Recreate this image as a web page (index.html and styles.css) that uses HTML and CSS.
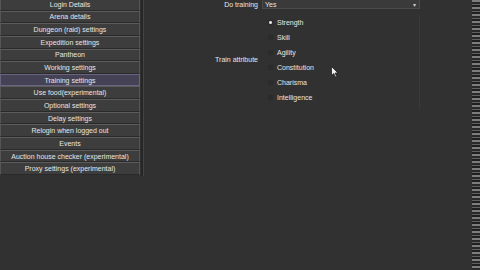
FILE: index.html
```html
<!DOCTYPE html>
<html>
<head>
<meta charset="utf-8">
<link rel="stylesheet" href="styles.css">
</head>
<body>
<div class="app">
  <nav class="sidebar">
    <div class="btn">Login Details</div>
    <div class="btn">Arena details</div>
    <div class="btn">Dungeon (raid) settings</div>
    <div class="btn">Expedition settings</div>
    <div class="btn">Pantheon</div>
    <div class="btn">Working settings</div>
    <div class="btn active">Training settings</div>
    <div class="btn">Use food(experimental)</div>
    <div class="btn">Optional settings</div>
    <div class="btn">Delay settings</div>
    <div class="btn">Relogin when logged out</div>
    <div class="btn">Events</div>
    <div class="btn">Auction house checker (experimental)</div>
    <div class="btn">Proxy settings (experimental)</div>
  </nav>
  <div class="divider"></div>
  <main class="content">
    <div class="row">
      <div class="label">Do training</div>
      <div class="combo"><span>Yes</span><span class="arrow">▾</span></div>
    </div>
    <div class="row attr">
      <div class="label">Train attribute</div>
      <div class="radios">
        <div class="radio on"><span class="dot"></span>Strength</div>
        <div class="radio"><span class="dot"></span>Skill</div>
        <div class="radio"><span class="dot"></span>Agility</div>
        <div class="radio"><span class="dot"></span>Constitution</div>
        <div class="radio"><span class="dot"></span>Charisma</div>
        <div class="radio"><span class="dot"></span>Intelligence</div>
      </div>
    </div>
    <svg class="cursor" width="8" height="12" viewBox="0 0 8 12"><path d="M0.5 0.5 L0.5 9.5 L2.7 7.5 L4.3 11 L5.6 10.4 L4.1 7 L7 7 Z" fill="#eee" stroke="#222" stroke-width="0.8"/></svg>
  </main>
  <div class="edge"></div>
</div>
</body>
</html>
```
FILE: styles.css
```css
html, body {
  margin: 0;
  padding: 0;
  background: #313131;
  width: 480px;
  height: 270px;
  overflow: hidden;
  font-family: "Liberation Sans", Arial, sans-serif;
  font-size: 7px;
  color: #e6e6e6;
}
.app {
  display: flex;
  height: 270px;
}
.sidebar {
  width: 140px;
  margin-top: -2px;
  display: flex;
  flex-direction: column;
  align-self: flex-start;
}
.btn {
  height: 12.65px;
  box-sizing: border-box;
  background: #3d3d3d;
  border: 1px solid #555;
  border-top-color: #5c5c5c;
  border-bottom-color: #2a2a2a;
  display: flex;
  align-items: center;
  justify-content: center;
  white-space: nowrap;
  line-height: 1;
}
.btn.active {
  background: #464255;
  border-color: #6a6480;
}
.divider {
  width: 2px;
  margin-left: 1px;
  height: 176px;
  background: #262626;
  border-right: 1px solid #444;
}
.content {
  position: relative;
  flex: 1;
  display: flex;
  flex-direction: column;
}
.row {
  display: grid;
  grid-template-columns: 114px 158px;
  column-gap: 4px;
  align-items: center;
}
.label {
  text-align: right;
}
.attr .label {
  padding-bottom: 6px;
}
.combo {
  height: 10px;
  margin-top: -1px;
  box-sizing: border-box;
  background: #3a3a3a;
  border: 1px solid #4a4a4a;
  display: flex;
  justify-content: space-between;
  align-items: center;
  padding: 0 3px 0 2px;
}
.arrow {
  font-size: 6px;
  color: #ccc;
}
.attr {
  margin-top: 6px;
}
.radios {
  display: flex;
  flex-direction: column;
  padding: 0 0 4px 6px;
  border-right: 1px solid #3a3a3a;
}
.radio {
  height: 15px;
  display: flex;
  align-items: center;
  gap: 4px;
}
.dot {
  width: 5px;
  height: 5px;
  border-radius: 50%;
  background: #2c2c2c;
  box-shadow: 0 0 1px #262626;
}
.radio.on .dot {
  background-image: radial-gradient(circle, #ddd 0 1.3px, transparent 1.6px);
}
.cursor {
  position: absolute;
  left: 187px;
  top: 66px;
}
.edge {
  width: 8px;
  background: repeating-linear-gradient(#bbb 0 2px, #222 2px 4px, #888 4px 5px, #111 5px 7px);
  opacity: 0.55;
}
```
